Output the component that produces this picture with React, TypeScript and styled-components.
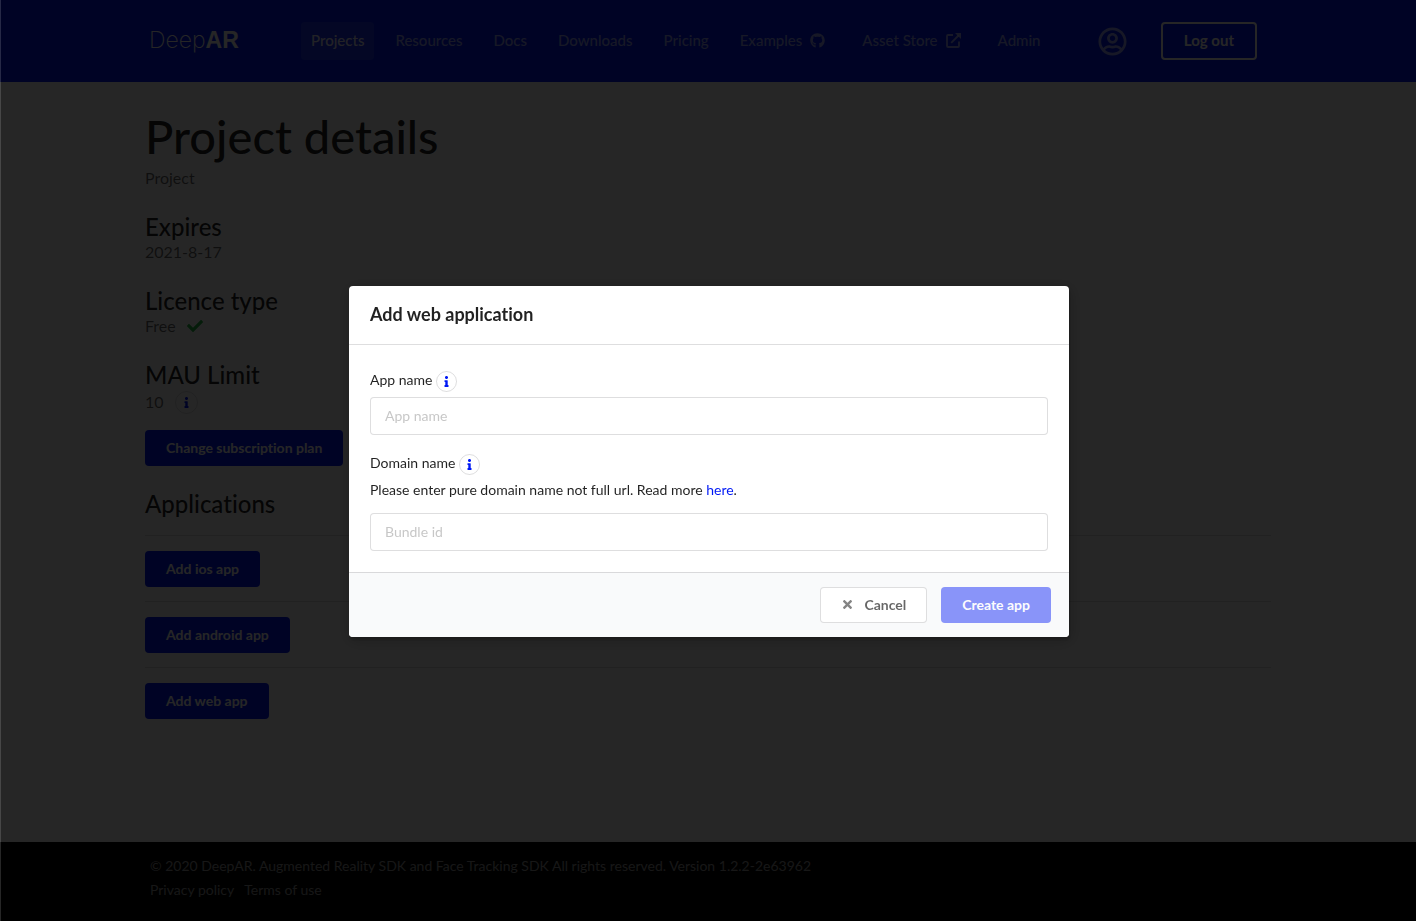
import React from "react";
import styled, { createGlobalStyle } from "styled-components";
import { FaCheck, FaGithub, FaInfo, FaRegUserCircle, FaTimes } from "react-icons/fa";

const brand = "#0019f5";
const ink = "rgba(0, 0, 0, 0.87)";
const line = "rgba(34, 36, 38, 0.15)";

const GlobalStyle = createGlobalStyle`
  *, *::before, *::after { box-sizing: border-box; }
  body {
    margin: 0;
    background: #fff;
    color: ${ink};
    font-family: Lato, "Liberation Sans", sans-serif;
    font-size: 14px;
    font-variant-ligatures: none;
    line-height: 20px;
  }
  button, input { font-family: inherit; font-variant-ligatures: none; }
`;

const Page = styled.div`
  display: flex;
  flex-direction: column;
  min-height: 100vh;
`;

const Container = styled.div`
  width: 100%;
  max-width: 1126px;
  margin: 0 auto;
`;

const TopBar = styled.header`
  background: ${brand};
`;

const TopBarInner = styled(Container)`
  display: flex;
  align-items: center;
  min-height: 82px;
  padding: 0 14px 0 4px;
`;

const Logo = styled.a`
  width: 152px;
  padding-bottom: 2px;
  color: #fff;
  font: 200 23px/28px Inter, "Liberation Sans", sans-serif;
  text-decoration: none;
  strong {
    font: 700 23px/28px "Liberation Sans", Arial, sans-serif;
  }
`;

const Nav = styled.nav`
  display: flex;
  flex: 1;
  gap: 11px;
`;

const NavLink = styled.a<{ $active?: boolean }>`
  display: flex;
  align-items: center;
  gap: 8px;
  height: 38px;
  padding: 0 10px 2px;
  border-radius: 4px;
  background: ${(p) => (p.$active ? "rgba(255, 255, 255, 0.12)" : "transparent")};
  color: ${(p) => (p.$active ? "rgba(255, 255, 255, 0.9)" : "rgba(255, 255, 255, 0.6)")};
  font-size: 15px;
  font-weight: 500;
  text-decoration: none;
  white-space: nowrap;
  svg {
    width: 15px;
    height: 15px;
    margin-right: 6px;
  }
`;

const AccountLink = styled.a`
  display: flex;
  margin-right: 34px;
  color: rgba(255, 255, 255, 0.6);
  svg {
    width: 29px;
    height: 29px;
  }
`;

const LogoutButton = styled.button`
  height: 38px;
  padding: 0 21px 2px;
  border: 2px solid #fff;
  border-radius: 4px;
  background: transparent;
  color: #fff;
  font-size: 15px;
  font-weight: 700;
`;

const Main = styled(Container).attrs({ as: "main" })`
  flex: 1;
  padding: 25px 0 40px;
`;

const PageTitle = styled.h1`
  margin: 0;
  font-size: 47px;
  font-weight: 500;
  line-height: 58px;
`;

const Subtitle = styled.p`
  margin: 1px 0 23px;
  color: rgba(0, 0, 0, 0.6);
  font-size: 16px;
  line-height: 24px;
`;

const Fact = styled.section`
  margin-bottom: 22px;
  &:last-of-type {
    margin-bottom: 13px;
  }
`;

const Heading = styled.h2`
  margin: 0;
  font-size: 24px;
  font-weight: 500;
  line-height: 28px;
`;

const FactValue = styled.div<{ $tall?: boolean }>`
  display: flex;
  align-items: center;
  gap: 11px;
  height: ${(p) => (p.$tall ? 28 : 24)}px;
  padding-bottom: 2px;
  color: rgba(0, 0, 0, 0.6);
  font-size: 16px;
`;

const CheckIcon = styled(FaCheck)`
  width: 16px;
  height: 16px;
  color: #21ba45;
`;

const InfoBadge = styled.button<{ $size: number }>`
  display: inline-flex;
  align-items: center;
  justify-content: center;
  width: ${(p) => p.$size}px;
  height: ${(p) => p.$size}px;
  padding: 0;
  border: 1px solid ${line};
  border-radius: 50%;
  background: transparent;
  color: ${brand};
  svg {
    width: 11px;
    height: 11px;
  }
`;

const PrimaryButton = styled.button`
  height: 36px;
  padding: 0 21px 2px;
  border: 0;
  border-radius: 4px;
  background: ${brand};
  color: #fff;
  font-size: 14px;
  font-weight: 700;
  &:disabled {
    opacity: 0.45;
  }
`;

const Applications = styled.div`
  margin-top: 24px;
`;

const AppRow = styled.div`
  padding: 15px 0 14px;
  border-top: 1px solid ${line};
`;

const AppList = styled.div`
  margin-top: 17px;
`;

const Footer = styled.footer`
  background: #000;
  color: rgba(255, 255, 255, 0.6);
`;

const FooterInner = styled(Container)`
  min-height: 79px;
  padding: 12px 5px;
  line-height: 24px;
`;

const FooterLinks = styled.div`
  display: flex;
  gap: 10px;
  a {
    color: inherit;
    text-decoration: none;
  }
`;

const Dimmer = styled.div`
  position: fixed;
  inset: 0;
  display: flex;
  align-items: center;
  justify-content: center;
  padding: 2px 0 0 1px;
  border-left: 1px solid rgba(255, 255, 255, 0.15);
  background: rgba(0, 0, 0, 0.85);
`;

const Dialog = styled.div`
  width: 720px;
  max-width: 95%;
  border-radius: 4px;
  background: #fff;
  box-shadow: 1px 3px 3px rgba(0, 0, 0, 0.2), 1px 3px 15px 2px rgba(0, 0, 0, 0.2);
  overflow: hidden;
`;

const DialogTitle = styled.h2`
  margin: 0;
  padding: 16px 21px 18px;
  border-bottom: 1px solid ${line};
  font-size: 18px;
  font-weight: 700;
  line-height: 24px;
`;

const DialogForm = styled.form`
  margin: 0;
`;

const Fields = styled.div`
  display: flex;
  flex-direction: column;
  gap: 19px;
  padding: 26px 21px 21px;
`;

const Field = styled.div`
  display: flex;
  flex-direction: column;
`;

const LabelRow = styled.div`
  display: flex;
  align-items: flex-start;
  gap: 4px;
  margin-bottom: 5px;
  line-height: 18px;
`;

const Hint = styled.p`
  margin: 0 0 13px;
  a {
    color: ${brand};
    text-decoration: none;
  }
`;

const TextInput = styled.input`
  width: 100%;
  height: 38px;
  padding: 0 14px 2px;
  border: 1px solid ${line};
  border-radius: 4px;
  background: #fff;
  color: ${ink};
  font-size: 14px;
  &::placeholder {
    color: rgba(191, 191, 191, 0.87);
    opacity: 1;
  }
`;

const Actions = styled.div`
  display: flex;
  justify-content: flex-end;
  gap: 14px;
  padding: 14px 18px;
  border-top: 1px solid ${line};
  background: #f9fafb;
`;

const CancelButton = styled.button`
  display: flex;
  align-items: center;
  gap: 10px;
  height: 36px;
  padding: 0 20px 2px;
  border: 1px solid ${line};
  border-radius: 4px;
  background: #fff;
  color: rgba(0, 0, 0, 0.6);
  font-size: 14px;
  font-weight: 700;
  svg {
    width: 13px;
    height: 13px;
    opacity: 0.8;
  }
`;

function ExternalIcon() {
  return (
    <svg viewBox="0 0 15 15" fill="none" aria-hidden="true">
      <path
        d="M7 2H2Q1 2 1 3V13Q1 14 2 14H12Q13 14 13 13V8.5"
        stroke="currentColor"
        strokeWidth="1.8"
      />
      <path d="M5.2 9.8L12.5 2.5" stroke="currentColor" strokeWidth="1.9" />
      <path d="M9 0H15V6Z" fill="currentColor" />
    </svg>
  );
}

const navItems = [
  { label: "Projects", active: true },
  { label: "Resources" },
  { label: "Docs" },
  { label: "Downloads" },
  { label: "Pricing" },
  { label: "Examples", icon: <FaGithub /> },
  { label: "Asset Store", icon: <ExternalIcon /> },
  { label: "Admin" },
];

const platforms = ["ios", "android", "web"];

export default function App() {
  return (
    <>
      <GlobalStyle />
      <Page>
        <TopBar>
          <TopBarInner>
            <Logo href="#">
              Deep<strong>AR</strong>
            </Logo>
            <Nav>
              {navItems.map((item) => (
                <NavLink key={item.label} href="#" $active={item.active}>
                  {item.label}
                  {item.icon}
                </NavLink>
              ))}
            </Nav>
            <AccountLink href="#" aria-label="Account">
              <FaRegUserCircle />
            </AccountLink>
            <LogoutButton type="button">Log out</LogoutButton>
          </TopBarInner>
        </TopBar>

        <Main>
          <PageTitle>Project details</PageTitle>
          <Subtitle>Project</Subtitle>
          <Fact>
            <Heading>Expires</Heading>
            <FactValue>2021-8-17</FactValue>
          </Fact>
          <Fact>
            <Heading>Licence type</Heading>
            <FactValue>
              Free
              <CheckIcon />
            </FactValue>
          </Fact>
          <Fact>
            <Heading>MAU Limit</Heading>
            <FactValue $tall>
              10
              <InfoBadge type="button" $size={23} aria-label="About the MAU limit">
                <FaInfo />
              </InfoBadge>
            </FactValue>
          </Fact>
          <PrimaryButton type="button">Change subscription plan</PrimaryButton>
          <Applications>
            <Heading>Applications</Heading>
            <AppList>
              {platforms.map((platform) => (
                <AppRow key={platform}>
                  <PrimaryButton type="button">Add {platform} app</PrimaryButton>
                </AppRow>
              ))}
            </AppList>
          </Applications>
        </Main>

        <Footer>
          <FooterInner>
            <div>
              © 2020 DeepAR. Augmented Reality SDK and Face Tracking SDK All rights reserved. Version
              1.2.2-2e63962
            </div>
            <FooterLinks>
              <a href="#">Privacy policy</a>
              <a href="#">Terms of use</a>
            </FooterLinks>
          </FooterInner>
        </Footer>
      </Page>

      <Dimmer>
        <Dialog role="dialog" aria-modal="true" aria-labelledby="dialog-title">
          <DialogTitle id="dialog-title">Add web application</DialogTitle>
          <DialogForm>
            <Fields>
              <Field>
                <LabelRow>
                  <label htmlFor="app-name">App name</label>
                  <InfoBadge type="button" $size={21} aria-label="About the app name">
                    <FaInfo />
                  </InfoBadge>
                </LabelRow>
                <TextInput id="app-name" type="text" placeholder="App name" />
              </Field>
              <Field>
                <LabelRow>
                  <label htmlFor="domain-name">Domain name</label>
                  <InfoBadge type="button" $size={21} aria-label="About the domain name">
                    <FaInfo />
                  </InfoBadge>
                </LabelRow>
                <Hint>
                  Please enter pure domain name not full url. Read more <a href="#">here</a>.
                </Hint>
                <TextInput id="domain-name" type="text" placeholder="Bundle id" />
              </Field>
            </Fields>
            <Actions>
              <CancelButton type="button">
                <FaTimes />
                Cancel
              </CancelButton>
              <PrimaryButton type="submit" disabled>
                Create app
              </PrimaryButton>
            </Actions>
          </DialogForm>
        </Dialog>
      </Dimmer>
    </>
  );
}
